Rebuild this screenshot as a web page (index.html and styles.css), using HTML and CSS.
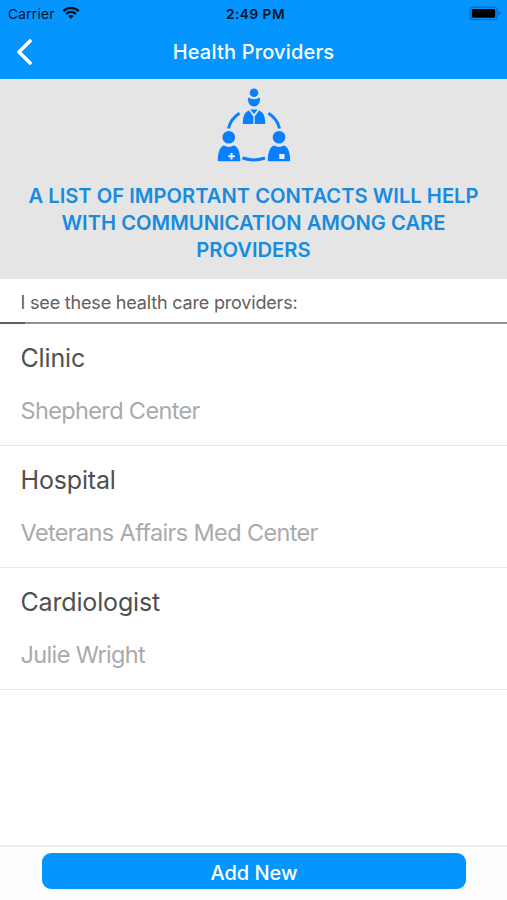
FILE: index.html
```html
<!DOCTYPE html>
<html lang="en">
<head>
<meta charset="utf-8">
<title>Health Providers</title>
<link rel="stylesheet" href="styles.css">
</head>
<body>
<div class="screen">
  <header class="header">
    <div class="status">
      <div class="status-left">
        <span class="carrier">Carrier</span>
        <svg class="wifi" width="18" height="14" viewBox="0 0 18 14">
          <g fill="none" stroke="#001020" stroke-width="2.3">
            <path d="M1.3 5.1C5.7 .8 12.3 .8 16.7 5.1"/>
            <path d="M4.1 8C7 5.3 11 5.3 13.9 8"/>
          </g>
          <path fill="#001020" d="M9 12.8 6.2 10.1C7.8 8.7 10.2 8.7 11.8 10.1Z"/>
        </svg>
      </div>
      <span class="time">2:49 PM</span>
      <svg class="battery" width="33" height="16" viewBox="0 0 33 16">
        <rect x=".9" y="1.2" width="27.2" height="12.4" rx="3.4" fill="none" stroke="#0468b5" stroke-width="1.2"/>
        <rect x="2.8" y="3" width="23.4" height="8.8" rx="1.4" fill="#000"/>
        <path d="M29.6 5.2Q31.5 6 31.5 7.4T29.6 9.6Z" fill="#0468b5"/>
      </svg>
    </div>
    <div class="nav">
      <svg class="back" width="16" height="26" viewBox="0 0 16 26">
        <path d="M14 2 3 13 14 24" fill="none" stroke="#fff" stroke-width="3.6" stroke-linecap="round" stroke-linejoin="round"/>
      </svg>
      <h1 class="title">Health Providers</h1>
    </div>
  </header>
  <section class="hero">
    <svg class="people" width="76" height="76" viewBox="0 0 76 76">
      <g fill="#087fff">
        <circle cx="38" cy="4.800" r="4.300"/>
        <path d="M32.300 9.400Q38 13 43.700 9.400C44.800 14.500 42 18.600 38 18.600S31.200 14.500 32.300 9.400Z"/>
        <path d="M34.200 21.500H41.800L38 26Z"/>
        <path d="M26.800 36C26.800 28.500 28.500 23.800 33 22.400L37.300 28.500V36Z"/>
        <path d="M49.200 36C49.200 28.500 47.500 23.800 43 22.400L38.700 28.500V36Z"/>
        <circle cx="12.800" cy="49.300" r="6.300"/>
        <path d="M1.800 73.200C1.800 64 4 58.600 8 57.600Q12.800 60.500 17.600 57.600C22 58.600 24.300 64 24.300 73.200Z"/>
        <circle cx="63" cy="49.300" r="6.300"/>
        <path d="M51.800 73.200C51.800 64 54 58.600 58.200 57.600Q63 60.500 67.800 57.600C72 58.600 74.200 64 74.200 73.200Z"/>
      </g>
      <g fill="none" stroke="#087fff" stroke-width="3">
        <path d="M12.500 40.500C14 33.500 17.500 29 23.500 25.200"/>
        <path d="M63.500 40.500C62 33.500 58.500 29 52.500 25.200"/>
        <path d="M26.500 70Q38 73.800 49 70"/>
      </g>
      <path d="M15.500 65V71.600M12.200 68.300H18.800" stroke="#e5f1ff" stroke-width="2"/>
      <rect x="63.300" y="66" width="5.200" height="5" fill="#e5f1ff"/>
    </svg>
    <p class="message">A LIST OF IMPORTANT CONTACTS WILL HELP<br>WITH COMMUNICATION AMONG CARE<br>PROVIDERS</p>
  </section>
  <div class="intro">I see these health care providers:</div>
  <div class="divider"></div>
  <main class="list">
    <article class="row"><h2>Clinic</h2><p>Shepherd Center</p></article>
    <article class="row"><h2>Hospital</h2><p>Veterans Affairs Med Center</p></article>
    <article class="row"><h2>Cardiologist</h2><p>Julie Wright</p></article>
  </main>
  <footer class="footer"><button class="add">Add New</button></footer>
</div>
</body>
</html>
```
FILE: styles.css
```css
* { box-sizing: border-box; margin: 0; padding: 0; }
body { font-family: Inter, "Liberation Sans", sans-serif; background: #fff; }
.screen { width: 507px; height: 900px; display: flex; flex-direction: column; overflow: hidden; }
.header { height: 79px; background: #0495ff; flex: none; }
.status { height: 27px; display: grid; grid-template-columns: 1fr auto 1fr; align-items: center; padding: 0 5px 0 8px; color: #001428; }
.status-left { display: flex; align-items: center; gap: 7px; }
.carrier { font-size: 13.700px; letter-spacing: .25px; line-height: 25px; padding-top: 2px; }
.wifi { margin-bottom: 1px; }
.time { font-size: 13.700px; font-weight: 600; letter-spacing: .5px; line-height: 25px; padding: 2px 0 0 1px; }
.battery { justify-self: end; }
.nav { height: 52px; display: grid; grid-template-columns: 32px 1fr 32px; align-items: center; padding: 0 0 2px 0; }
.back { justify-self: end; }
.title { font-size: 20px; font-weight: 500; letter-spacing: .18px; line-height: 26px; color: #fff; text-align: center; }
.hero { height: 200px; flex: none; background: #e5e5e5; padding-top: 9px; text-align: center; }
.people { display: block; margin: 0 auto; }
.message { font-size: 20.200px; line-height: 27px; font-weight: 600; color: #168be2; padding-top: 18px; white-space: nowrap; }
.intro { height: 43px; flex: none; padding: 9px 20px 0 20.500px; font-size: 18px; line-height: 30px; letter-spacing: -.18px; color: #606060; }
.divider { height: 2px; flex: none; background: linear-gradient(90deg, #606060 25px, #929292 25px); }
.list { flex: 1; }
.row { height: 122px; border-bottom: 1px solid #e9e9e9; padding: 17px 20px 0 20.500px; }
.row h2 { font-size: 25px; line-height: 34px; font-weight: 400; letter-spacing: -.16px; color: #505050; }
.row p { font-size: 23.500px; line-height: 30px; letter-spacing: -.64px; color: #aaa; margin-top: 21px; }
.footer { height: 55px; flex: none; border-top: 2px solid #eee; padding: 6px 41px 0 42px; background: #fdfdfd; }
.add { display: block; width: 100%; height: 36px; border: 0; border-radius: 9px; background: #0495ff; color: #fff; font: 500 20px/40px Inter, "Liberation Sans", sans-serif; }
```
